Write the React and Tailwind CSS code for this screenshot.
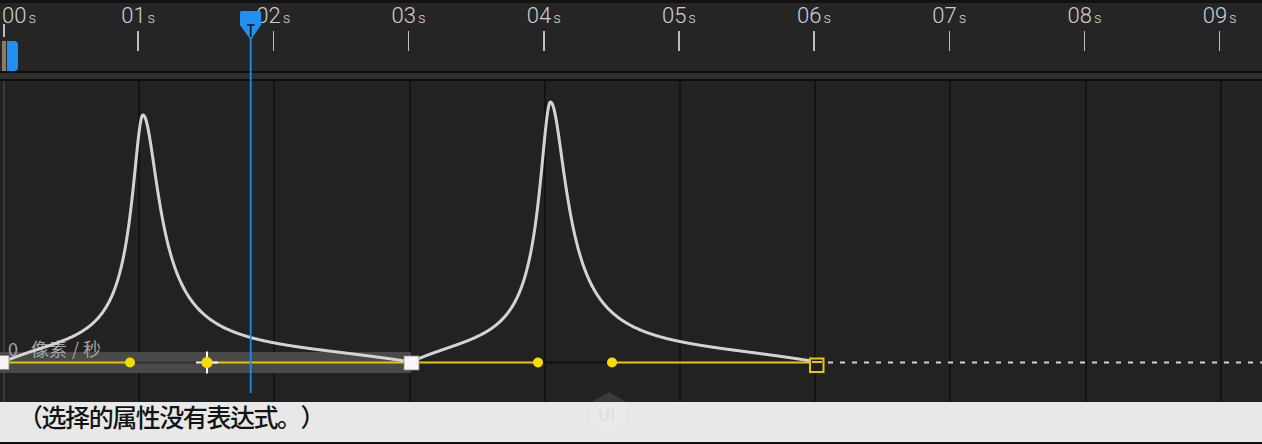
import React from 'react';

function peakPath(x0, xp, x1, base, H, wl, wr, k) {
  const Dl = xp - x0;
  const Dr = x1 - xp;
  const f = (d, w) => Math.pow(1 + (d / w) * (d / w), -k);
  const fel = f(Dl, wl);
  const fer = f(Dr, wr);
  const pts = [];
  for (let x = x0; x <= x1 + 0.001; x += 0.5) {
    const d = x - xp;
    let g;
    if (d < 0) g = f(-d, wl) - fel * Math.pow(-d / Dl, 4);
    else g = f(d, wr) - fer * Math.pow(d / Dr, 4);
    pts.push([x, base - H * g]);
  }
  return 'M ' + pts.map(([x, y]) => `${x.toFixed(2)} ${y.toFixed(2)}`).join(' L ');
}

function Label({ text, className = '' }) {
  return (
    <div className={`mt-[2px] h-[22px] flex items-baseline leading-none text-[#d0d0d0] font-light ${className}`}>
      <span className="text-[22px]">{text}</span>
      <span className="text-[15px] ml-[2px]">s</span>
    </div>
  );
}

const YEL = '#e6c700';
const DOT = '#f7dc00';

export default function App() {
  const labels = ['01', '02', '03', '04', '05', '06', '07', '08', '09'];
  const c1 = peakPath(3, 143, 411, 362, 247, 11, 16, 0.6);
  const c2 = peakPath(411, 550.5, 817, 362, 260, 11, 16, 0.6);
  return (
    <div className="relative w-[1262px] h-[444px] overflow-hidden bg-[#111] font-['Roboto',sans-serif] select-none">
      <div className="h-[3px] bg-[#121212]" />

      {/* Ruler */}
      <div className="relative h-[68px] bg-[#252525] overflow-hidden">
        <div className="flex">
          <div className="w-[70.6px] shrink-0 flex flex-col items-start">
            <Label text="00" className="ml-[2px]" />
            <div className="ml-[3px] mt-[-3px] w-[1.5px] h-[13px] bg-[#bdbdbd]" />
          </div>
          {labels.map((l) => (
            <div key={l} className="w-[135.2px] shrink-0 flex flex-col items-center">
              <Label text={l} />
              <div className="mt-[4px] w-[1.5px] h-[20px] bg-[#bdbdbd]" />
            </div>
          ))}
        </div>
        <div className="absolute left-[2px] bottom-0 flex h-[30px]">
          <div className="w-[4px] bg-[#8a7c66]" />
          <div className="ml-[1px] w-[11px] bg-[#1f8ff0] rounded-r-[4px]" />
        </div>
      </div>

      <div className="h-[2px] bg-[#0d0d0d]" />
      <div className="h-[6px] bg-[#2e2e2e]" />
      <div className="h-[2px] bg-[#0d0d0d]" />

      {/* Graph */}
      <div className="relative h-[321px] bg-[#222222] overflow-hidden">
        <div className="flex h-full">
          <div className="w-[3px] shrink-0" />
          {Array.from({ length: 10 }).map((_, i) => (
            <div
              key={i}
              className={`w-[135.2px] shrink-0 border-l-2 ${i === 0 ? 'border-[#3a3a3a]' : 'border-[#131313]'}`}
            />
          ))}
        </div>
        <svg className="absolute inset-0" width="1262" height="321" viewBox="0 81 1262 321">
          <rect x="0" y="352" width="411" height="21" fill="#494949" />
          <text x="8" y="355.5" fontSize="18" fill="#a3a3a3" fontFamily="'Noto Sans CJK SC', sans-serif">0</text>
          <text x="31 49 72 83" y="355.5" fontSize="18" fill="#a3a3a3" fontFamily="'Noto Sans CJK SC', sans-serif">像素/秒</text>

          <line x1="3" y1="362.5" x2="130" y2="362.5" stroke={YEL} strokeWidth="2.2" />
          <line x1="130" y1="362.5" x2="207" y2="362.5" stroke="#333" strokeWidth="2" />
          <line x1="207" y1="362.5" x2="538" y2="362.5" stroke={YEL} strokeWidth="2.2" />
          <line x1="538" y1="362.5" x2="612" y2="362.5" stroke="#101010" strokeWidth="2" />
          <line x1="612" y1="362.5" x2="812" y2="362.5" stroke={YEL} strokeWidth="2.2" />

          <line x1="828" y1="362.5" x2="1262" y2="362.5" stroke="#d2d2d2" strokeWidth="2" strokeDasharray="5 7" />

          <path d={c1} fill="none" stroke="#d3d3d3" strokeWidth="3" strokeLinejoin="round" strokeLinecap="round" />
          <path d={c2} fill="none" stroke="#d3d3d3" strokeWidth="3" strokeLinejoin="round" strokeLinecap="round" />

          <circle cx="130" cy="362.5" r="5" fill={DOT} />
          <line x1="196" y1="362.5" x2="218" y2="362.5" stroke="#f4f4f4" strokeWidth="2" />
          <line x1="207" y1="351.5" x2="207" y2="373.5" stroke="#f4f4f4" strokeWidth="2" />
          <circle cx="207" cy="362.5" r="5.5" fill={DOT} />
          <circle cx="538" cy="362.5" r="5" fill={DOT} />
          <circle cx="612" cy="362.5" r="5" fill={DOT} />

          <rect x="-4" y="355.5" width="13" height="14" fill="#f4f4f4" stroke="#8a8a8a" strokeWidth="0.8" />
          <rect x="404" y="356" width="15" height="14" fill="#f6f6f6" stroke="#8a8a8a" strokeWidth="0.8" />
          <rect x="810" y="358.5" width="13.5" height="13.5" fill="#1e1e1e" stroke={YEL} strokeWidth="2" />
          <line x1="812" y1="362" x2="822" y2="362" stroke={YEL} strokeWidth="2" />
        </svg>
      </div>

      {/* Bottom status */}
      <div className="h-[40px] bg-[#e8e8e8] flex items-start pt-[2px] pl-[18px]">
        <span className="text-[25px] leading-none font-medium tracking-[-1.45px] text-[#141414] [text-spacing-trim:space-all] font-['Noto_Sans_CJK_JP',sans-serif]">
          （选择的属性没有表达式。）
        </span>
      </div>
      <div className="h-[2px] bg-[#111]" />

      {/* Overlay: playhead + watermark */}
      <svg className="absolute left-0 top-0 pointer-events-none" width="1262" height="444" viewBox="0 0 1262 444">
        <g opacity="0.5">
          <polygon points="609,392 627,402.5 627,423.5 609,434 591,423.5 591,402.5" fill="#ffffff" opacity="0.22" />
          <text x="598" y="421" fontSize="17" fontWeight="700" fill="#d8d8d8" fontFamily="'Liberation Sans', sans-serif">UI</text>
        </g>
        <line x1="250.7" y1="36" x2="250.7" y2="393" stroke="#1f8be8" strokeWidth="1.8" />
        <path d="M 241.5 11 L 259.5 11 Q 261 11 261 12.5 L 261 25 L 251.5 39 L 250 39 L 240 25 L 240 12.5 Q 240 11 241.5 11 Z" fill="#1f8ff0" />
        <line x1="247" y1="25" x2="254.5" y2="25" stroke="#111" strokeWidth="1.6" />
        <line x1="250.7" y1="25" x2="250.7" y2="37" stroke="#111" strokeWidth="1.6" />
      </svg>
    </div>
  );
}
